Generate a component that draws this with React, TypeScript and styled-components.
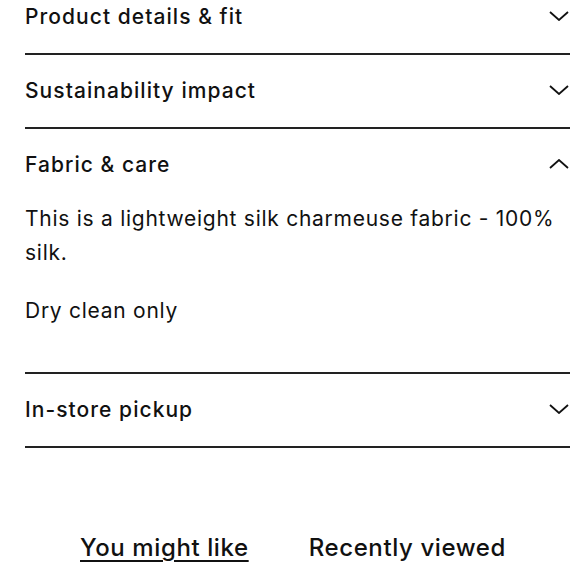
import * as React from 'react'
import styled, { createGlobalStyle } from 'styled-components'

const GlobalStyle = createGlobalStyle`
  html, body {
    margin: 0;
    padding: 0;
    background: #fff;
  }
  body {
    font-family: Inter, "Noto Sans", sans-serif;
    color: #111;
    overflow: hidden;
  }
`

const Page = styled.div`
  width: 580px;
  height: 580px;
  overflow: hidden;
`

const Accordion = styled.div`
  margin: -19px 10px 0 25px;
  display: flex;
  flex-direction: column;
`

const Section = styled.div`
  border-bottom: 2px solid #222;
`

const Header = styled.div`
  height: 72px;
  padding-bottom: 2px;
  box-sizing: border-box;
  display: flex;
  align-items: center;
  justify-content: space-between;
`

const Title = styled.span`
  font-size: 21px;
  font-weight: 500;
  letter-spacing: 0.05em;
`

const Chevron = styled.svg<{ open?: boolean }>`
  width: 20px;
  height: 10px;
  margin-right: 1px;
  transform: ${({ open }) => (open ? 'rotate(180deg)' : 'none')};
`

const Body = styled.div`
  padding: 1px 0 20px;
  font-size: 21px;
  line-height: 34px;
  letter-spacing: 0.035em;
`

const Para = styled.p`
  margin: 0 0 24px;
`

const Tabs = styled.div`
  display: flex;
  justify-content: center;
  gap: 60px;
  margin-top: 85px;
  padding-left: 6px;
`

const Tab = styled.span<{ active?: boolean }>`
  font-size: 24px;
  font-weight: 500;
  letter-spacing: 0.025em;
  text-decoration: ${({ active }) => (active ? 'underline' : 'none')};
  text-decoration-thickness: 2px;
  text-underline-offset: 4px;
`

interface ItemProps {
  title: string
  open?: boolean
  children?: React.ReactNode
}

function Item ({ title, open, children }: ItemProps) {
  return (
    <Section>
      <Header>
        <Title>{title}</Title>
        <Chevron open={open} viewBox="0 0 20 10" fill="none">
          <path d="M1 1 L10 9 L19 1" stroke="#111" strokeWidth="1.8" />
        </Chevron>
      </Header>
      {open && <Body>{children}</Body>}
    </Section>
  )
}

export default function App () {
  return (
    <Page>
      <GlobalStyle />
      <Accordion>
        <Item title="Product details & fit" />
        <Item title="Sustainability impact" />
        <Item title="Fabric & care" open>
          <Para>This is a lightweight silk charmeuse fabric - 100% silk.</Para>
          <Para>Dry clean only</Para>
        </Item>
        <Item title="In-store pickup" />
      </Accordion>
      <Tabs>
        <Tab active>You might like</Tab>
        <Tab>Recently viewed</Tab>
      </Tabs>
    </Page>
  )
}
